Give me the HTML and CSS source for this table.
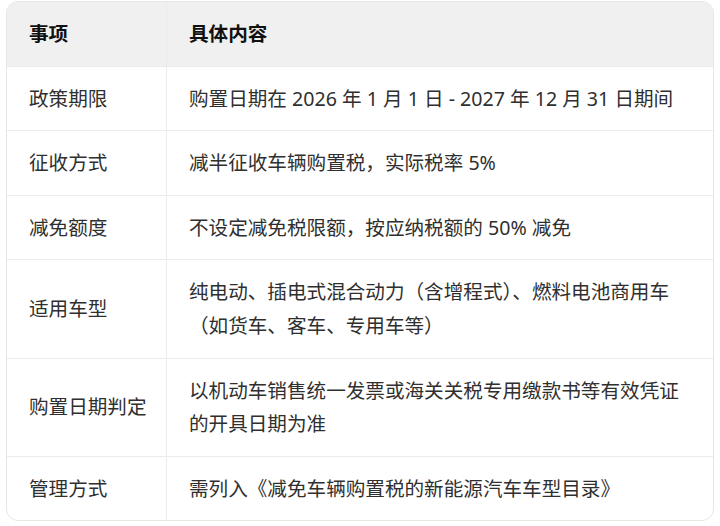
FILE: index.html
```html
<!DOCTYPE html>
<html lang="zh-CN">
<head>
<meta charset="utf-8">
<link rel="stylesheet" href="styles.css">
</head>
<body>
<div class="wrap">
<table class="policy">
<thead>
<tr><th class="c1">事项</th><th>具体内容</th></tr>
</thead>
<tbody>
<tr><td class="c1">政策期限</td><td>购置日期在 2026 年 1 月 1 日 - 2027 年 12 月 31 日期间</td></tr>
<tr><td class="c1">征收方式</td><td>减半征收车辆购置税，实际税率 5%</td></tr>
<tr><td class="c1">减免额度</td><td>不设定减免税限额，按应纳税额的 50% 减免</td></tr>
<tr><td class="c1">适用车型</td><td>纯电动、插电式混合动力（含增程式）、燃料电池商用车（如货车、客车、专用车等）</td></tr>
<tr><td class="c1">购置日期判定</td><td>以机动车销售统一发票或海关关税专用缴款书等有效凭证的开具日期为准</td></tr>
<tr><td class="c1">管理方式</td><td>需列入《减免车辆购置税的新能源汽车车型目录》</td></tr>
</tbody>
</table>
</div>
</body>
</html>
```

FILE: styles.css
```css
html, body {
  margin: 0;
  padding: 0;
  background: #ffffff;
}
.wrap {
  padding: 1px 6px 0 6px;
}
.policy {
  width: 708px;
  border-collapse: separate;
  border-spacing: 0;
  border: 1px solid #e6e6e6;
  border-radius: 12px;
  overflow: hidden;
  font-family: "Noto Sans", "Noto Sans CJK SC", sans-serif;
  font-size: 19.6px;
  line-height: 33.6px;
  color: #2f2f2f;
  table-layout: fixed;
}
.policy th, .policy td {
  text-align: left;
  vertical-align: middle;
  padding: 15px 21px 15px 22px;
  border-bottom: 1px solid #ebebeb;
}
.policy tbody tr:last-child td {
  border-bottom: none;
}
.policy .c1 {
  width: 160px;
  box-sizing: border-box;
  border-right: 1px solid #ebebeb;
  white-space: nowrap;
}
.policy th {
  background: #f0f0f0;
  font-weight: 700;
  color: #111111;
}
```
